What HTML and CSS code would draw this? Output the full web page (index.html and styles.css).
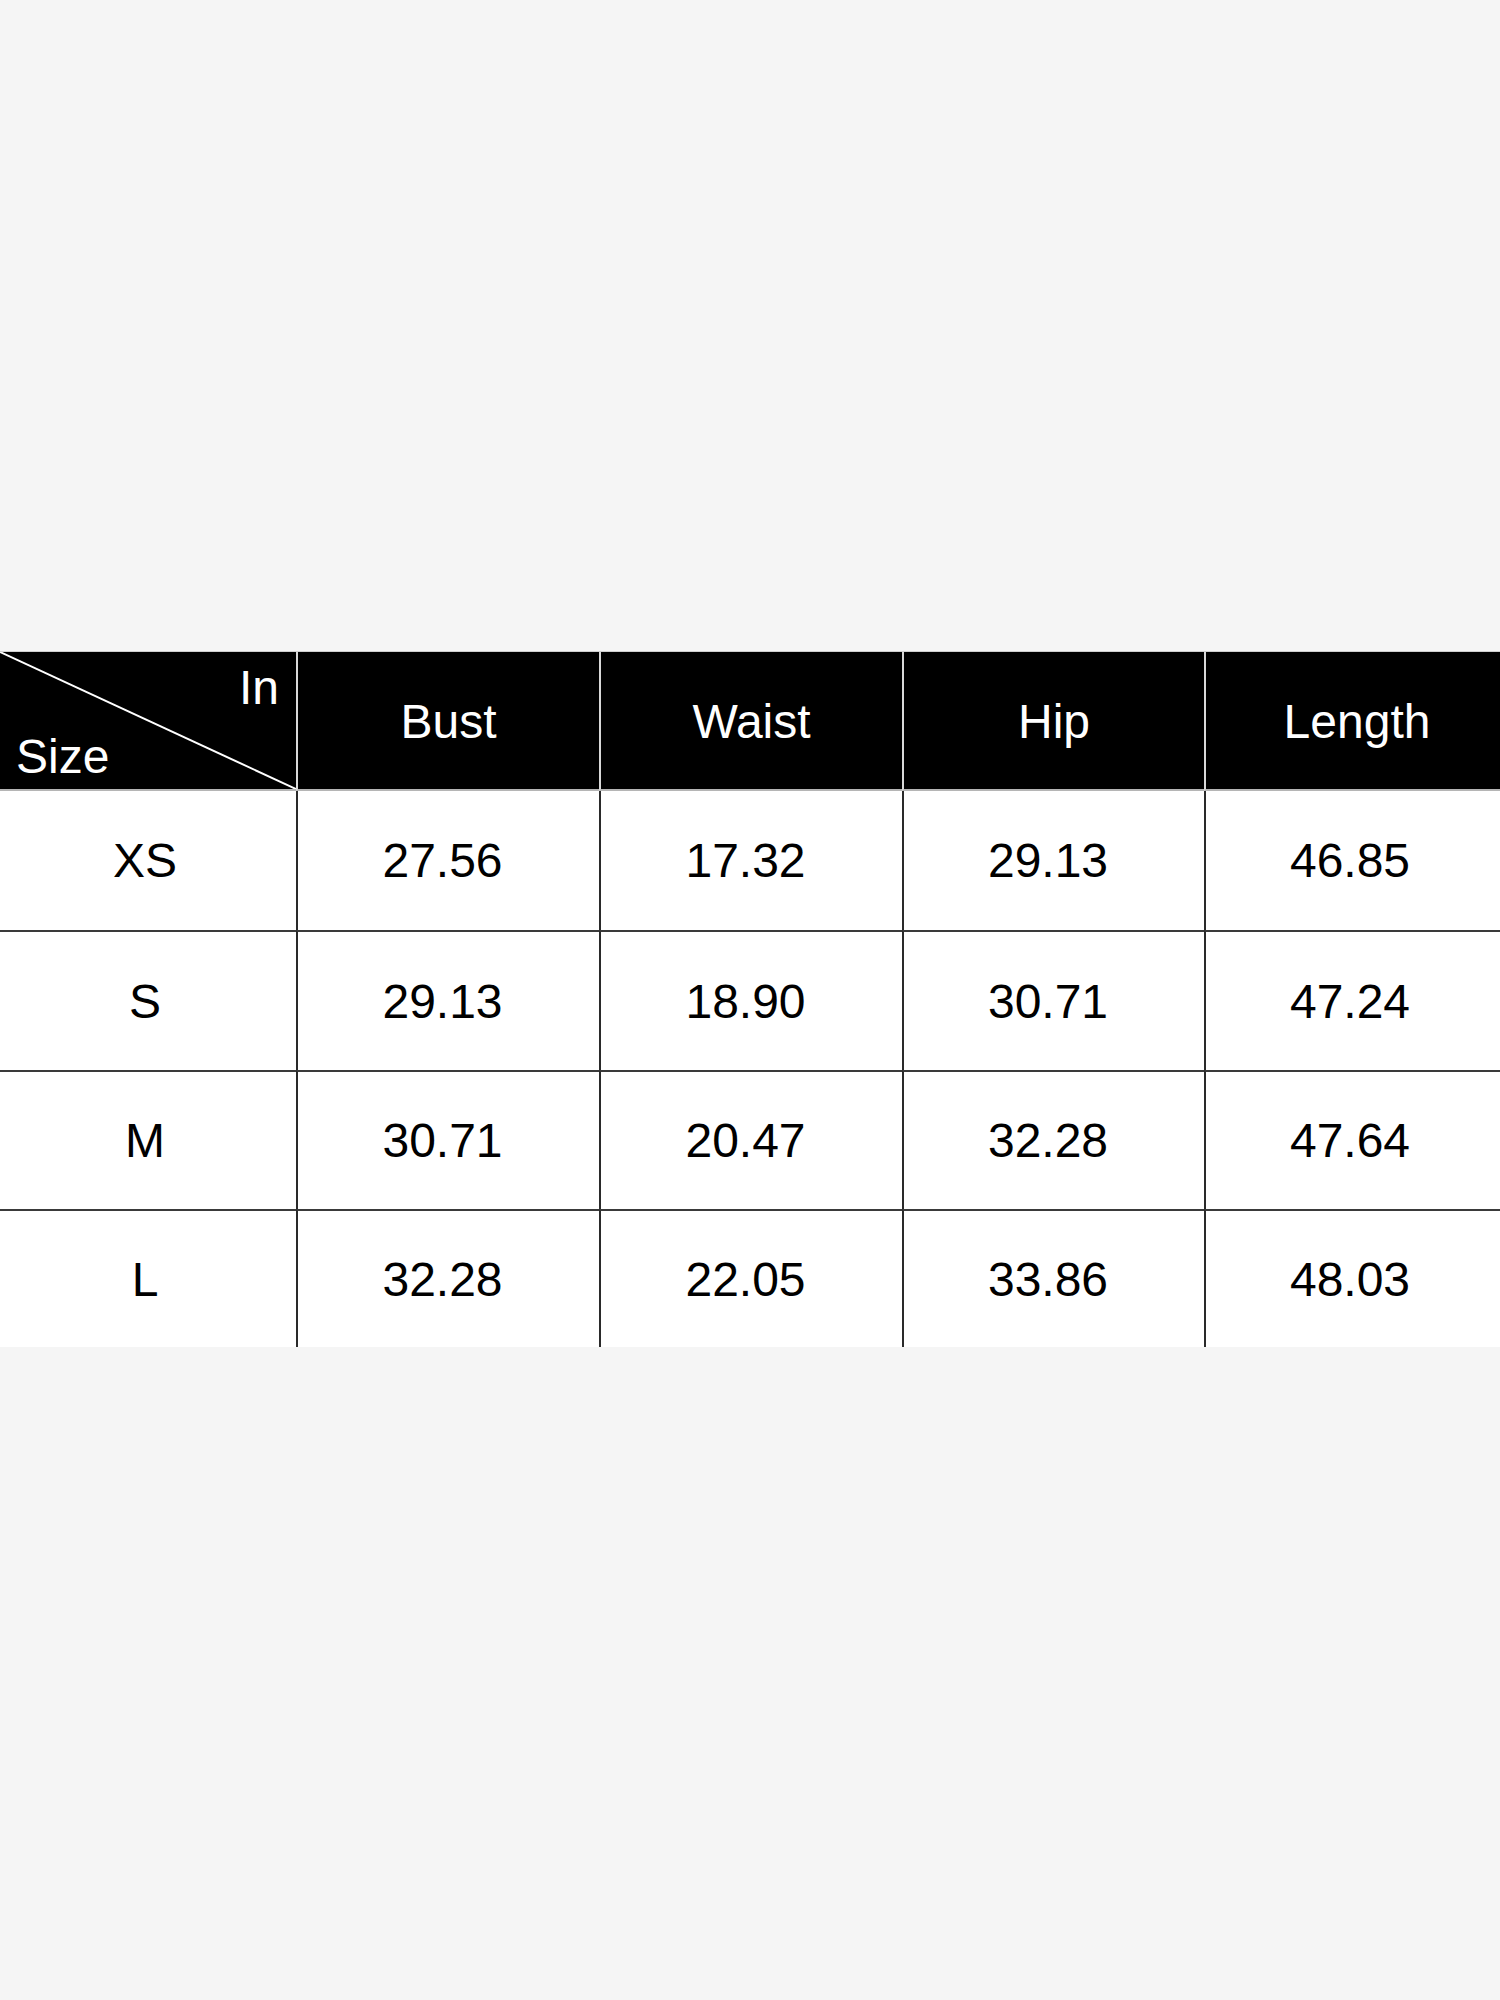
FILE: index.html
```html
<!DOCTYPE html>
<html lang="en">
<head>
<meta charset="utf-8">
<title>Size chart</title>
<link rel="stylesheet" href="styles.css">
</head>
<body>
<main class="page">
  <div class="chart">
    <div class="hcell corner">
      <svg class="diag" viewBox="0 0 100 100" preserveAspectRatio="none" aria-hidden="true">
        <line x1="0" y1="0" x2="100" y2="100" vector-effect="non-scaling-stroke"/>
      </svg>
      <span class="unit">In</span>
      <span class="size-label">Size</span>
    </div>
    <div class="hcell">Bust</div>
    <div class="hcell">Waist</div>
    <div class="hcell">Hip</div>
    <div class="hcell last">Length</div>

    <div class="cell first">XS</div>
    <div class="cell">27.56</div>
    <div class="cell">17.32</div>
    <div class="cell">29.13</div>
    <div class="cell last">46.85</div>

    <div class="cell first ruled">S</div>
    <div class="cell ruled">29.13</div>
    <div class="cell ruled">18.90</div>
    <div class="cell ruled">30.71</div>
    <div class="cell last ruled">47.24</div>

    <div class="cell first ruled">M</div>
    <div class="cell ruled">30.71</div>
    <div class="cell ruled">20.47</div>
    <div class="cell ruled">32.28</div>
    <div class="cell last ruled">47.64</div>

    <div class="cell first ruled">L</div>
    <div class="cell ruled">32.28</div>
    <div class="cell ruled">22.05</div>
    <div class="cell ruled">33.86</div>
    <div class="cell last ruled">48.03</div>
  </div>
</main>
</body>
</html>
```

FILE: styles.css
```css
* {
  box-sizing: border-box;
}

html, body {
  margin: 0;
  padding: 0;
  background: #f5f5f5;
}

body {
  font-family: "Liberation Sans", Arial, sans-serif;
  width: 1500px;
  height: 2000px;
}

.page {
  padding-top: 651px;
}

.chart {
  display: grid;
  grid-template-columns: 296px 303px 303px 302px 296px;
  grid-template-rows: 139px 139px 140px 139px 138px;
  border-top: 1px solid #cfcfcf;
}

.hcell {
  background: #000;
  color: #fff;
  font-size: 48px;
  display: flex;
  align-items: center;
  justify-content: center;
  border-left: 2px solid #d8d8d8;
  border-bottom: 2px solid #b5b5b5;
  padding-top: 2px;
}

.hcell.last {
  padding-left: 8px;
}

.corner {
  position: relative;
  border-left: none;
  display: flex;
  flex-direction: column;
  justify-content: space-between;
  align-items: stretch;
  padding: 12px 17px 8px 16px;
}

.diag {
  position: absolute;
  left: 0;
  top: 0;
  width: 100%;
  height: 100%;
}

.diag line {
  stroke: #fff;
  stroke-width: 2px;
}

.unit {
  line-height: 1;
  text-align: right;
}

.size-label {
  line-height: 1;
  text-align: left;
}

.cell {
  background: #fff;
  color: #000;
  font-size: 48px;
  display: flex;
  align-items: center;
  justify-content: center;
  border-left: 2px solid #2a2a2a;
  padding-right: 12px;
}

.cell.first {
  border-left: none;
  padding-right: 6px;
}

.cell.last {
  padding-right: 6px;
}

.cell.ruled {
  border-top: 2px solid #3a3a3a;
}
```
